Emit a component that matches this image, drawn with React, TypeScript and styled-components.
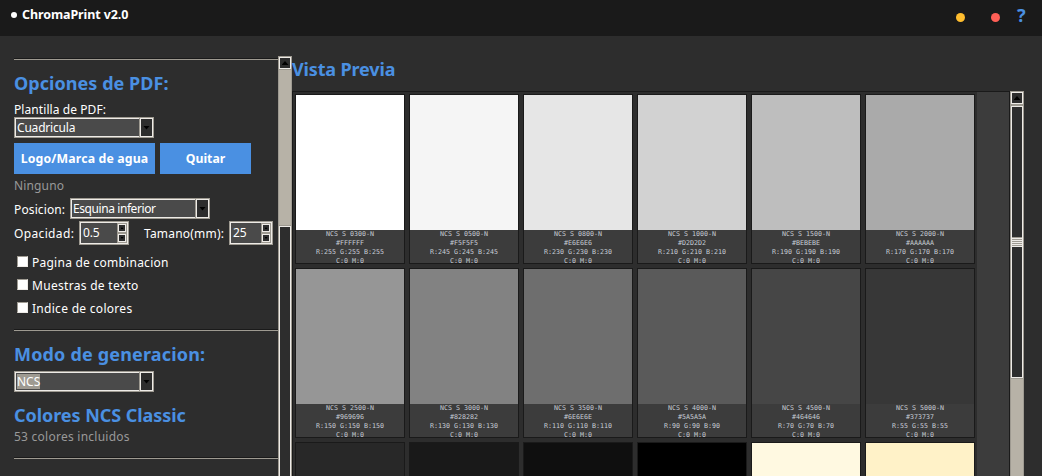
import React from 'react';
import styled, { createGlobalStyle } from 'styled-components';

const Global = createGlobalStyle`
  * { box-sizing: border-box; }
  body { margin: 0; background: #2d2d2d; overflow: hidden; }
`;

const Window = styled.div`
  width: 1042px;
  height: 476px;
  overflow: hidden;
  background: #2d2d2d;
  color: #fff;
  font: 12px/16px 'Noto Sans', 'Open Sans', sans-serif;
  white-space: nowrap;
  display: flex;
  flex-direction: column;
`;

const TitleBar = styled.header`
  flex: 0 0 36px;
  background: #1a1a1a;
  display: flex;
  align-items: flex-start;
  padding: 6px 15px 0 11px;
`;
const TitleDot = styled.i`
  width: 6px;
  height: 6px;
  margin: 6px 5px 0 0;
  border-radius: 50%;
  background: #fff;
`;
const AppName = styled.strong<{ $ls: number }>`
  flex: 1;
  padding-top: 1px;
  font-size: 12.5px;
  letter-spacing: ${(p) => p.$ls}px;
`;
const WindowDot = styled.i<{ $color: string; $gap: number }>`
  width: 9px;
  height: 9px;
  margin: 7px ${(p) => p.$gap}px 0 0;
  border-radius: 50%;
  background: ${(p) => p.$color};
`;
const Help = styled.strong`
  width: 10px;
  color: #4a90e2;
  font-size: 18px;
  line-height: 18px;
`;

const Body = styled.main`
  flex: 1;
  min-height: 0;
  display: flex;
`;

const Sidebar = styled.aside`
  width: 278px;
  padding: 22px 0 0 14px;
  display: flex;
  flex-direction: column;
  overflow: hidden;
`;
const Separator = styled.div`
  flex: 0 0 2px;
  border-top: 1px solid #1a1a1a;
  border-bottom: 1px solid #9e9a91;
`;
const Heading = styled.h2<{ $ls?: number; $top?: number }>`
  margin: ${(p) => p.$top ?? 0}px 0 0;
  color: #4a90e2;
  font-size: 18px;
  line-height: 26px;
  font-weight: 700;
  letter-spacing: ${(p) => p.$ls ?? 0}px;
`;
const Label = styled.span<{ $ls?: number; $muted?: boolean }>`
  line-height: 16px;
  color: ${(p) => (p.$muted ? '#999' : '#fff')};
  letter-spacing: ${(p) => p.$ls ?? 0}px;
`;
const LowLabel = styled(Label)`
  display: block;
  padding-top: 2px;
`;
const Line = styled.div<{ $h: number; $top?: number; $gap?: number }>`
  flex: 0 0 ${(p) => p.$h}px;
  margin-top: ${(p) => p.$top ?? 0}px;
  display: flex;
  align-items: center;
  gap: ${(p) => p.$gap ?? 0}px;
`;
const Fixed = styled.div<{ $w: number }>`
  flex: 0 0 ${(p) => p.$w}px;
`;

const ComboFrame = styled.div`
  width: 140px;
  height: 21px;
  display: flex;
  border: 1px solid #9e9a91;
`;
const ComboField = styled.div<{ $ls: number }>`
  flex: 1;
  border: 1px solid #eeebe7;
  background: #4a4a4a;
  padding-left: 1px;
  line-height: 17px;
  letter-spacing: ${(p) => p.$ls}px;
`;
const Selected = styled.span`
  display: inline-block;
  height: 15px;
  margin-top: 1px;
  line-height: 15px;
  background: #9e9a91;
`;
const ArrowButton = styled.div`
  width: 13px;
  border: 1px solid #eeebe7;
  box-shadow: -1px 0 0 #9e9a91;
  display: flex;
  align-items: center;
  justify-content: center;
  background: #2d2d2d;
`;
const Triangle = styled.i<{ $up?: boolean; $size: number }>`
  width: ${(p) => p.$size * 2 - 1}px;
  height: ${(p) => p.$size}px;
  background: #000;
  clip-path: ${(p) => (p.$up ? 'polygon(50% 0, 100% 100%, 0 100%)' : 'polygon(0 0, 100% 0, 50% 100%)')};
`;

const SpinFrame = styled.div<{ $w: number }>`
  width: ${(p) => p.$w}px;
  height: 24px;
  display: flex;
  border: 1px solid #9e9a91;
`;
const SpinField = styled.div`
  flex: 1;
  display: flex;
  justify-content: space-between;
  border: 1px solid #eeebe7;
  background: #4a4a4a;
  padding-left: 2px;
  line-height: 19px;
  letter-spacing: -0.2px;
`;
const SpinButtons = styled.div`
  width: 10px;
  display: grid;
  grid-template-rows: 10px 10px;
`;
const SpinButton = styled.div`
  border: 1px solid #9e9a91;
  box-shadow: inset 0 0 0 1px #eeebe7;
  background: #2d2d2d;
  display: flex;
  align-items: center;
  justify-content: center;
`;

const ActionButton = styled.button<{ $w: number; $ls: number }>`
  width: ${(p) => p.$w}px;
  height: 31px;
  padding: 0;
  border: 0;
  background: #4a90e2;
  color: #fff;
  font: 700 12.3px/32px 'Noto Sans', 'Open Sans', sans-serif;
  letter-spacing: ${(p) => p.$ls}px;
`;
const CheckBox = styled.i`
  width: 11px;
  height: 11px;
  margin: -2px 4px 0 3px;
  background: #fff;
  border: 1px solid #9e9a91;
  border-right-color: #eeebe7;
  border-bottom-color: #eeebe7;
`;

const Scrollbar = styled.div<{ $top: number }>`
  flex: 0 0 14px;
  margin-top: ${(p) => p.$top}px;
  border: 1px solid #9e9a91;
  border-bottom: 0;
  background: #b7b2a7;
  display: flex;
  flex-direction: column;
`;
const ScrollArrow = styled.div`
  flex: 0 0 12px;
  border: 1px solid #eeebe7;
  box-shadow: 0 1px 0 #9e9a91;
  background: #2d2d2d;
  display: flex;
  align-items: center;
  justify-content: center;
`;
const Thumb = styled.div<{ $top: number; $h: number }>`
  flex: 0 0 ${(p) => p.$h}px;
  margin-top: ${(p) => p.$top}px;
  border: 1px solid #eeebe7;
  box-shadow: 0 -1px 0 #9e9a91, 0 1px 0 #9e9a91;
  background: #2d2d2d;
  display: flex;
  flex-direction: column;
  justify-content: center;
`;
const Grip = styled.div`
  height: 10px;
  background: repeating-linear-gradient(#9e9a91 0 1px, #eeebe7 1px 2px);
`;

const Preview = styled.section`
  width: 718px;
  display: flex;
  flex-direction: column;
  padding-top: 20px;
`;
const Canvas = styled.div`
  flex: 1;
  min-height: 0;
  margin-top: 9px;
  border: 1px solid #1a1a1a;
  border-bottom: 0;
  background: #3c3c3c;
  overflow: hidden;
`;
const CardGrid = styled.div`
  width: 684px;
  padding: 2px;
  background: #2d2d2d;
  display: grid;
  grid-template-columns: repeat(6, 110px);
  grid-auto-rows: 170px;
  gap: 4px;
`;
const Card = styled.div`
  border: 1px solid #1a1a1a;
  background: #3c3c3c;
  overflow: hidden;
`;
const Swatch = styled.div<{ $color: string }>`
  height: 135px;
  background: ${(p) => p.$color};
`;
const CardText = styled.div`
  font: 6.67px/9px 'DejaVu Sans Mono', monospace;
  color: #c8ced6;
  text-align: center;
`;

const grays: [string, number][] = [
  ['0300', 255], ['0500', 245], ['0800', 230], ['1000', 210], ['1500', 190], ['2000', 170],
  ['2500', 150], ['3000', 130], ['3500', 110], ['4000', 90], ['4500', 70], ['5000', 55],
];
const more = ['#282828', '#191919', '#0f0f0f', '#000000', '#fff9e1', '#fff2c8'];

const hex = (v: number) => '#' + v.toString(16).toUpperCase().padStart(2, '0').repeat(3);

const Combo = ({ value, selected, spacing = 0 }: { value: string; selected?: boolean; spacing?: number }) => (
  <ComboFrame>
    <ComboField $ls={spacing}>{selected ? <Selected>{value}</Selected> : value}</ComboField>
    <ArrowButton><Triangle $size={4} /></ArrowButton>
  </ComboFrame>
);

const Spin = ({ value, width }: { value: string; width: number }) => (
  <SpinFrame $w={width}>
    <SpinField>
      {value}
      <SpinButtons>
        <SpinButton><Triangle $up $size={2} /></SpinButton>
        <SpinButton><Triangle $size={2} /></SpinButton>
      </SpinButtons>
    </SpinField>
  </SpinFrame>
);

export default function App() {
  return (
    <Window>
      <Global />
      <TitleBar>
        <TitleDot />
        <AppName $ls={-0.1}>ChromaPrint v2.0</AppName>
        <WindowDot $color="#ffbd2e" $gap={26} />
        <WindowDot $color="#ff5f56" $gap={17} />
        <Help>?</Help>
      </TitleBar>
      <Body>
        <Sidebar>
          <Separator />
          <Heading $top={10} $ls={0.05}>Opciones de PDF:</Heading>
          <Line $h={16} $top={6}><Label $ls={0.08}>Plantilla de PDF:</Label></Line>
          <Line $h={21} $top={-1}><Combo value="Cuadricula" spacing={-0.2} /></Line>
          <Line $h={31} $top={5} $gap={5}>
            <ActionButton $w={141} $ls={0.15}>Logo/Marca de agua</ActionButton>
            <ActionButton $w={91} $ls={0}>Quitar</ActionButton>
          </Line>
          <Line $h={16} $top={4}><Label $muted $ls={0.15}>Ninguno</Label></Line>
          <Line $h={21} $top={4}>
            <Fixed $w={56}><LowLabel $ls={0.12}>Posicion:</LowLabel></Fixed>
            <Combo value="Esquina inferior" spacing={-0.42} />
          </Line>
          <Line $h={24} $top={2}>
            <Fixed $w={65}><LowLabel $ls={0.35}>Opacidad:</LowLabel></Fixed>
            <Spin value="0.5" width={50} />
            <Fixed $w={15} />
            <Fixed $w={85}><LowLabel $ls={0.2}>Tamano(mm):</LowLabel></Fixed>
            <Spin value="25" width={44} />
          </Line>
          <Line $h={23} $top={6}><CheckBox /><Label $ls={0.25}>Pagina de combinacion</Label></Line>
          <Line $h={23}><CheckBox /><Label $ls={0.3}>Muestras de texto</Label></Line>
          <Line $h={23}><CheckBox /><Label $ls={0.29}>Indice de colores</Label></Line>
          <Line $h={9} />
          <Separator />
          <Heading $top={10} $ls={0.17}>Modo de generacion:</Heading>
          <Line $h={21} $top={4}><Combo value="NCS" selected /></Line>
          <Heading $top={10} $ls={-0.05}>Colores NCS Classic</Heading>
          <Line $h={16} $top={1}><Label $muted $ls={0.25}>53 colores incluidos</Label></Line>
          <Line $h={12} />
          <Separator />
        </Sidebar>
        <Scrollbar $top={20}>
          <ScrollArrow><Triangle $up $size={4} /></ScrollArrow>
          <Thumb $top={157} $h={400} />
        </Scrollbar>
        <Preview>
          <Heading $ls={-0.15}>Vista Previa</Heading>
          <Canvas>
            <CardGrid>
              {grays.map(([code, v]) => (
                <Card key={code}>
                  <Swatch $color={hex(v)} />
                  <CardText>
                    <div>NCS S {code}-N</div>
                    <div>{hex(v)}</div>
                    <div>R:{v} G:{v} B:{v}</div>
                    <div>C:0 M:0</div>
                  </CardText>
                </Card>
              ))}
              {more.map((c) => (
                <Card key={c}><Swatch $color={c} /></Card>
              ))}
            </CardGrid>
          </Canvas>
        </Preview>
        <Scrollbar $top={55}>
          <ScrollArrow><Triangle $up $size={4} /></ScrollArrow>
          <Thumb $top={2} $h={272}><Grip /></Thumb>
        </Scrollbar>
      </Body>
    </Window>
  );
}
